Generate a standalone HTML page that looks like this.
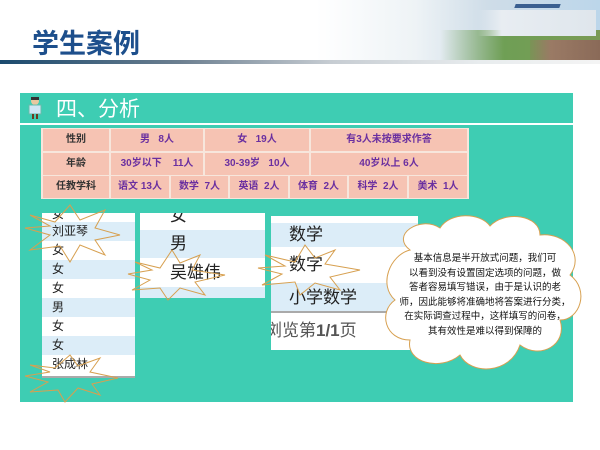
<!DOCTYPE html><html><head><meta charset="utf-8"><style>
*{margin:0;padding:0;box-sizing:border-box}
body{width:600px;height:450px;background:#fff;position:relative;overflow:hidden;font-family:"Liberation Sans","Noto Sans CJK SC",sans-serif}
.a{position:absolute}
.c{position:absolute;background:#f6c3b3;color:#6a2fa0;font-weight:bold;font-size:10px;text-align:center;line-height:22px;height:22px}
.c.h{color:#333}
.list div{height:19px;line-height:19px;font-size:12px;padding-left:10px;color:#222}
.s{background:#dcedf8}
</style></head><body>
<div class="a" style="left:316px;top:0;width:284px;height:60px;background:linear-gradient(90deg,#fff 0%,#eef3f6 35%,#cfdde8 60%,#bcd6ea 100%)"></div>
<div class="a" style="left:440px;top:30px;width:160px;height:30px;background:linear-gradient(90deg,rgba(120,170,90,0),#6f9f55 40%,#7a9a55)"></div>
<div class="a" style="left:478px;top:10px;width:118px;height:26px;background:linear-gradient(90deg,rgba(230,236,242,0),#e8edf2 20%,#dfe6ec);"></div>
<div class="a" style="left:515px;top:4px;width:45px;height:4px;background:#3a5f90;transform:skewX(-20deg)"></div>
<div class="a" style="left:530px;top:40px;width:70px;height:20px;background:linear-gradient(90deg,rgba(150,110,90,.2),#9a7a65 30%,#8a6a58)"></div>
<div class="a" style="left:32px;top:22px;font-size:27px;font-weight:bold;color:#1d4f8c">学生案例</div>
<div class="a" style="left:0;top:60px;width:600px;height:4px;background:linear-gradient(90deg,#1b4a6e,#6c7f90 30%,#c6ccd2 55%,#e8ecee 80%,#f4f4f4)"></div>
<div class="a" style="left:20px;top:93px;width:553px;height:30px;background:#3ecdb3"></div>
<div class="a" style="left:28px;top:96px;width:14px;height:24px"><svg width="14" height="24"><circle cx="7" cy="5" r="4" fill="#e8c8a0"/><rect x="3" y="1" width="8" height="3" fill="#333"/><rect x="1" y="9" width="12" height="9" fill="#cfe6f5" stroke="#6ba"/><rect x="4" y="18" width="2" height="5" fill="#6b3a20"/><rect x="8" y="18" width="2" height="5" fill="#6b3a20"/></svg></div>
<div class="a" style="left:56px;top:93px;font-size:21px;color:#fff">四、分析</div>
<div class="a" style="left:20px;top:125px;width:553px;height:277px;background:#3ecdb3"></div>
<div class="a" style="left:41px;top:128px;width:428px;height:71px;background:#f7e6dc"></div>
<div class="c h" style="left:43px;top:129px;width:66px">性别</div>
<div class="c" style="left:111px;top:129px;width:92px">男&nbsp;&nbsp;&nbsp;8人</div>
<div class="c" style="left:205px;top:129px;width:104px">女&nbsp;&nbsp;&nbsp;19人</div>
<div class="c" style="left:311px;top:129px;width:156px">有3人未按要求作答</div>
<div class="c h" style="left:43px;top:153px;width:66px">年龄</div>
<div class="c" style="left:111px;top:153px;width:92px">30岁以下&nbsp;&nbsp;&nbsp;&nbsp;11人</div>
<div class="c" style="left:205px;top:153px;width:104px">30-39岁&nbsp;&nbsp;&nbsp;10人</div>
<div class="c" style="left:311px;top:153px;width:156px">40岁以上 6人</div>
<div class="c h" style="left:43px;top:176px;width:66px">任教学科</div>
<div class="c" style="left:111px;top:176px;width:58px">语文&nbsp;13人</div>
<div class="c" style="left:171px;top:176px;width:57px">数学&nbsp;&nbsp;7人</div>
<div class="c" style="left:230px;top:176px;width:58px">英语&nbsp;&nbsp;2人</div>
<div class="c" style="left:290px;top:176px;width:57px">体育&nbsp;&nbsp;2人</div>
<div class="c" style="left:349px;top:176px;width:58px">科学&nbsp;&nbsp;2人</div>
<div class="c" style="left:409px;top:176px;width:58px">美术&nbsp;&nbsp;1人</div>
<div class="a list" style="left:42px;top:213px;width:93px;height:165px;background:#fff;overflow:hidden;border-bottom:2px solid #aaa">
<div style="height:9px;line-height:2px">女</div><div class="s">刘亚琴</div><div>女</div><div class="s">女</div><div>女</div><div class="s">男</div><div>女</div><div class="s">女</div><div>张成林</div></div>
<div class="a" style="left:140px;top:213px;width:125px;height:85px;background:#fff;overflow:hidden;font-size:17px;color:#222">
<div style="height:17px;line-height:6px;padding-left:30px">女</div><div class="s" style="height:28px;line-height:28px;padding-left:30px">男</div><div style="height:29px;line-height:29px;padding-left:30px">吴雄伟</div><div class="s" style="height:11px"></div></div>
<div class="a" style="left:271px;top:216px;width:147px;height:134px;background:#fff;overflow:hidden;font-size:17px;color:#222">
<div style="height:7px"></div><div class="s" style="height:24px;line-height:24px;padding-left:18px">数学</div><div style="height:36px;line-height:36px;padding-left:18px">数字</div><div class="s" style="height:30px;line-height:30px;padding-left:18px;border-bottom:2px solid #aaa">小学数学</div><div style="height:36px;line-height:36px;font-size:17px;color:#555;margin-left:-6px">浏览第<b>1/1</b>页</div></div>
<svg class="a" style="left:0;top:0" width="600" height="450">
<g fill="none" stroke="#d7a050" stroke-width="1">
<polygon points="30,215 55,222 70,205 80,220 105,210 95,228 120,235 95,240 105,255 80,245 70,262 60,246 30,250 50,235 25,228 50,226"/>
<polygon points="30,365 55,368 70,355 78,366 100,358 90,372 118,378 92,384 100,395 78,388 65,402 58,390 30,392 48,382 25,376 50,372"/>
<polygon points="135,262 160,268 172,250 180,263 200,255 192,270 225,275 195,282 205,295 180,288 168,300 160,288 132,290 150,280 128,274 152,270"/>
<polygon points="265,255 295,262 305,245 315,258 335,250 325,264 360,270 330,277 340,290 315,283 300,295 295,282 262,285 282,274 258,268 285,266"/>
</g>
<path d="M410,250 C390,235 420,215 440,228 C450,212 480,212 490,226 C505,210 540,215 540,235 C565,232 585,255 570,275 C590,290 580,320 560,320 C568,345 540,360 520,345 C510,375 470,375 460,355 C440,372 405,362 410,340 C385,340 378,312 395,300 C378,285 390,255 410,250 Z" fill="#fff" stroke="#d7a050"/>
</svg>
<div class="a" style="left:392px;top:252px;width:186px;font-size:9.5px;line-height:14.5px;text-align:center;color:#111">基本信息是半开放式问题，我们可<br>以看到没有设置固定选项的问题，做<br>答者容易填写错误，由于是认识的老<br>师，因此能够将准确地将答案进行分类，<br>在实际调查过程中，这样填写的问卷，<br>其有效性是难以得到保障的</div>
</body></html>
